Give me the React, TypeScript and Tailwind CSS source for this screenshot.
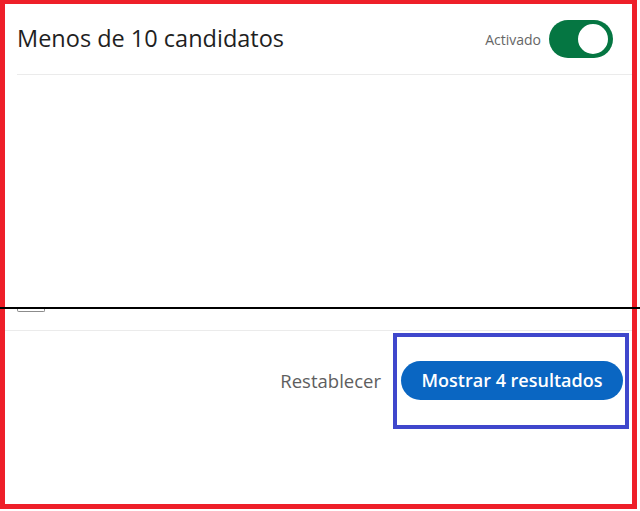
export default function App() {
  return (
    <div
      className="w-[640px] h-[511px] bg-white overflow-hidden"
      style={{ fontFamily: '"Open Sans", "Noto Sans", sans-serif' }}
    >
      <div className="w-[637px] h-[509px] border-x-[5px] border-t-[4px] border-b-[5px] border-[#ee1f29] flex flex-col">
        {/* HEADER */}

        <div className="h-[70px] flex items-center justify-between pl-3 pr-[19px]">
          <h2 className="text-[23.5px] text-[#1f1f1f] leading-none">
            Menos de 10 candidatos
          </h2>

          <div className="flex items-center gap-2">
            <span className="text-[14px] text-[#666666]">Activado</span>
            <div className="w-[64px] h-[38px] rounded-full bg-[#057642] flex items-center justify-end pr-[3px]">
              <div className="w-[34px] h-[34px] rounded-full bg-white border-[2px] border-[#057642]" />
            </div>
          </div>
        </div>

        <div className="ml-3 h-px bg-[#ebebeb]" />

        {/* BODY */}

        <div className="flex-1" />

        <div className="h-[2px] bg-black -ml-[5px] -mr-[8px]" />

        <div className="h-[21px] pl-3">
          <div className="w-[28px] h-[3px] border-x border-b border-[#8c8c8c] rounded-b-[2px]" />
        </div>

        <div className="h-px bg-[#ebebeb]" />

        {/* FOOTER */}

        <div className="h-[173px] flex justify-end items-start pt-[2px] pr-[3px]">
          <div className="flex items-center gap-3">
            <button className="text-[18.5px] text-[#5e5e5e]">Restablecer</button>

            <div className="border-4 border-[#3f47cc] pl-1 pr-[2px] pt-6 pb-[25px]">
              <button className="h-[39px] w-[222px] rounded-full bg-[#0a66c2] text-white text-[18px] font-semibold">
                Mostrar 4 resultados
              </button>
            </div>
          </div>
        </div>
      </div>
    </div>
  )
}
